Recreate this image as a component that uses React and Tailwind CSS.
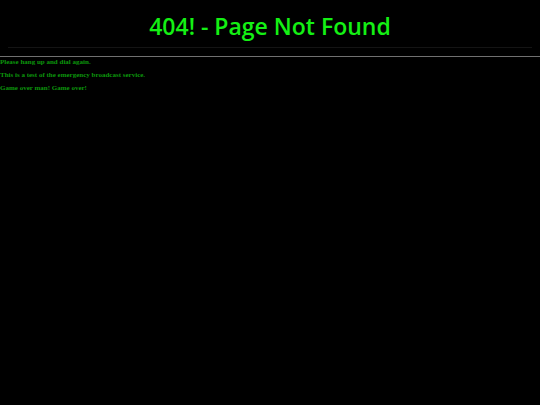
const messages = [
  "Please hang up and dial again.",
  "This is a test of the emergency broadcast service.",
  "Game over man! Game over!",
];

const App = () => {
  return (
    <div className="min-h-screen bg-black">
      <header className="px-2 pt-1.5">
        <h1 className="border-b border-[#141414] text-center font-['Open_Sans',sans-serif] text-[23px] leading-[41px] font-semibold text-[#14f014]">
          404! - Page Not Found
        </h1>
      </header>

      <main className="mt-2 flex flex-col gap-[3px] border-t border-[#707070] font-['Liberation_Serif',serif] text-[7px] leading-[10px] font-bold text-[#0c960c]">
        {messages.map((message) => (
          <p key={message}>{message}</p>
        ))}
      </main>
    </div>
  );
};

export default App;
